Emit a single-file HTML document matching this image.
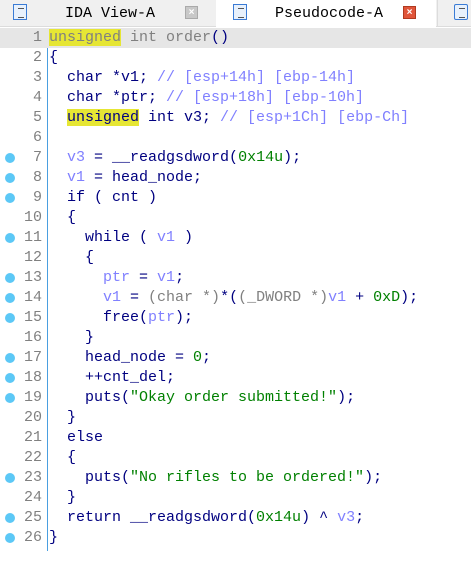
<!DOCTYPE html>
<html><head><style>
body{margin:0;width:471px;height:561px;background:#fff;overflow:hidden;position:relative;font-family:"Liberation Mono",monospace;}
.tabs{position:absolute;left:0;top:0;width:471px;height:26px;background:#f0f0f0;border-bottom:1px solid #dcdcdc;}
.tab{position:absolute;top:0;height:26px;font-size:15px;line-height:28px;color:#000;}
.ic{position:absolute;top:4px;width:14px;height:16px;border:1px solid #3a7bd5;background:#e8f1fc;box-sizing:border-box;}
.ic:before{content:"";position:absolute;left:4px;top:3px;width:6px;height:8px;border-top:1px solid #555;border-bottom:1px solid #555;}
.x{position:absolute;top:6px;width:13px;height:13px;box-sizing:border-box;color:#fff;font-size:10px;line-height:12px;text-align:center;font-family:"Liberation Sans",sans-serif;font-weight:bold}
.code{position:absolute;left:0;top:28px;width:471px;}
.ln{height:20px;position:relative;font-size:15px;line-height:20px;white-space:pre;color:#000080;}
.num{position:absolute;right:429px;color:#808080;}
.t{position:absolute;left:49px;}
.dot{position:absolute;left:5px;top:5px;width:10px;height:10px;border-radius:50%;background:#5cc8f6;}
.gut{position:absolute;left:47px;top:28px;width:1px;height:523px;background:#4a9fe0;}
.v{color:#8080ff}.c{color:#8080ff}.g{color:#808080}.s{color:#008000}.n{color:#008000}
.hl{background:#e6e634}
</style></head><body>
<div class="tabs">
 <div class="tab" style="left:0;width:215px;"><div class="ic" style="left:13px"></div><span style="position:absolute;left:65px">IDA View-A</span><div class="x" style="left:185px;background:#c8c8c8;border:1px solid #aaa">×</div></div>
 <div class="tab" style="left:216px;width:220px;background:#fff;height:27px"><div class="ic" style="left:17px"></div><span style="position:absolute;left:59px">Pseudocode-A</span><div class="x" style="left:187px;background:#e0553a;border:1px solid #b03a20">×</div></div>
 <div class="tab" style="left:437px;width:34px;border-left:1px solid #dcdcdc"><div class="ic" style="left:16px;border-radius:2px"></div></div>
</div>
<div class="gut"></div>
<div class="code">
<div class="ln" style="background:#e6e6e6"><span class="num">1</span><span class="t g"><span class="hl">unsigned</span> int order<span style="color:#000080">()</span></span></div>
<div class="ln"><span class="num">2</span><span class="t">{</span></div>
<div class="ln"><span class="num">3</span><span class="t">  char *v1; <span class="c">// [esp+14h] [ebp-14h]</span></span></div>
<div class="ln"><span class="num">4</span><span class="t">  char *ptr; <span class="c">// [esp+18h] [ebp-10h]</span></span></div>
<div class="ln"><span class="num">5</span><span class="t">  <span class="hl">unsigned</span> int v3; <span class="c">// [esp+1Ch] [ebp-Ch]</span></span></div>
<div class="ln"><span class="num">6</span></div>
<div class="ln"><span class="dot"></span><span class="num">7</span><span class="t">  <span class="v">v3</span> = __readgsdword(<span class="n">0x14u</span>);</span></div>
<div class="ln"><span class="dot"></span><span class="num">8</span><span class="t">  <span class="v">v1</span> = head_node;</span></div>
<div class="ln"><span class="dot"></span><span class="num">9</span><span class="t">  if ( cnt )</span></div>
<div class="ln"><span class="num">10</span><span class="t">  {</span></div>
<div class="ln"><span class="dot"></span><span class="num">11</span><span class="t">    while ( <span class="v">v1</span> )</span></div>
<div class="ln"><span class="num">12</span><span class="t">    {</span></div>
<div class="ln"><span class="dot"></span><span class="num">13</span><span class="t">      <span class="v">ptr</span> = <span class="v">v1</span>;</span></div>
<div class="ln"><span class="dot"></span><span class="num">14</span><span class="t">      <span class="v">v1</span> = <span class="g">(char *)</span>*(<span class="g">(_DWORD *)</span><span class="v">v1</span> + <span class="n">0xD</span>);</span></div>
<div class="ln"><span class="dot"></span><span class="num">15</span><span class="t">      free(<span class="v">ptr</span>);</span></div>
<div class="ln"><span class="num">16</span><span class="t">    }</span></div>
<div class="ln"><span class="dot"></span><span class="num">17</span><span class="t">    head_node = <span class="n">0</span>;</span></div>
<div class="ln"><span class="dot"></span><span class="num">18</span><span class="t">    ++cnt_del;</span></div>
<div class="ln"><span class="dot"></span><span class="num">19</span><span class="t">    puts(<span class="s">"Okay order submitted!"</span>);</span></div>
<div class="ln"><span class="num">20</span><span class="t">  }</span></div>
<div class="ln"><span class="num">21</span><span class="t">  else</span></div>
<div class="ln"><span class="num">22</span><span class="t">  {</span></div>
<div class="ln"><span class="dot"></span><span class="num">23</span><span class="t">    puts(<span class="s">"No rifles to be ordered!"</span>);</span></div>
<div class="ln"><span class="num">24</span><span class="t">  }</span></div>
<div class="ln"><span class="dot"></span><span class="num">25</span><span class="t">  return __readgsdword(<span class="n">0x14u</span>) ^ <span class="v">v3</span>;</span></div>
<div class="ln"><span class="dot"></span><span class="num">26</span><span class="t">}</span></div>
</div>
</body></html>
